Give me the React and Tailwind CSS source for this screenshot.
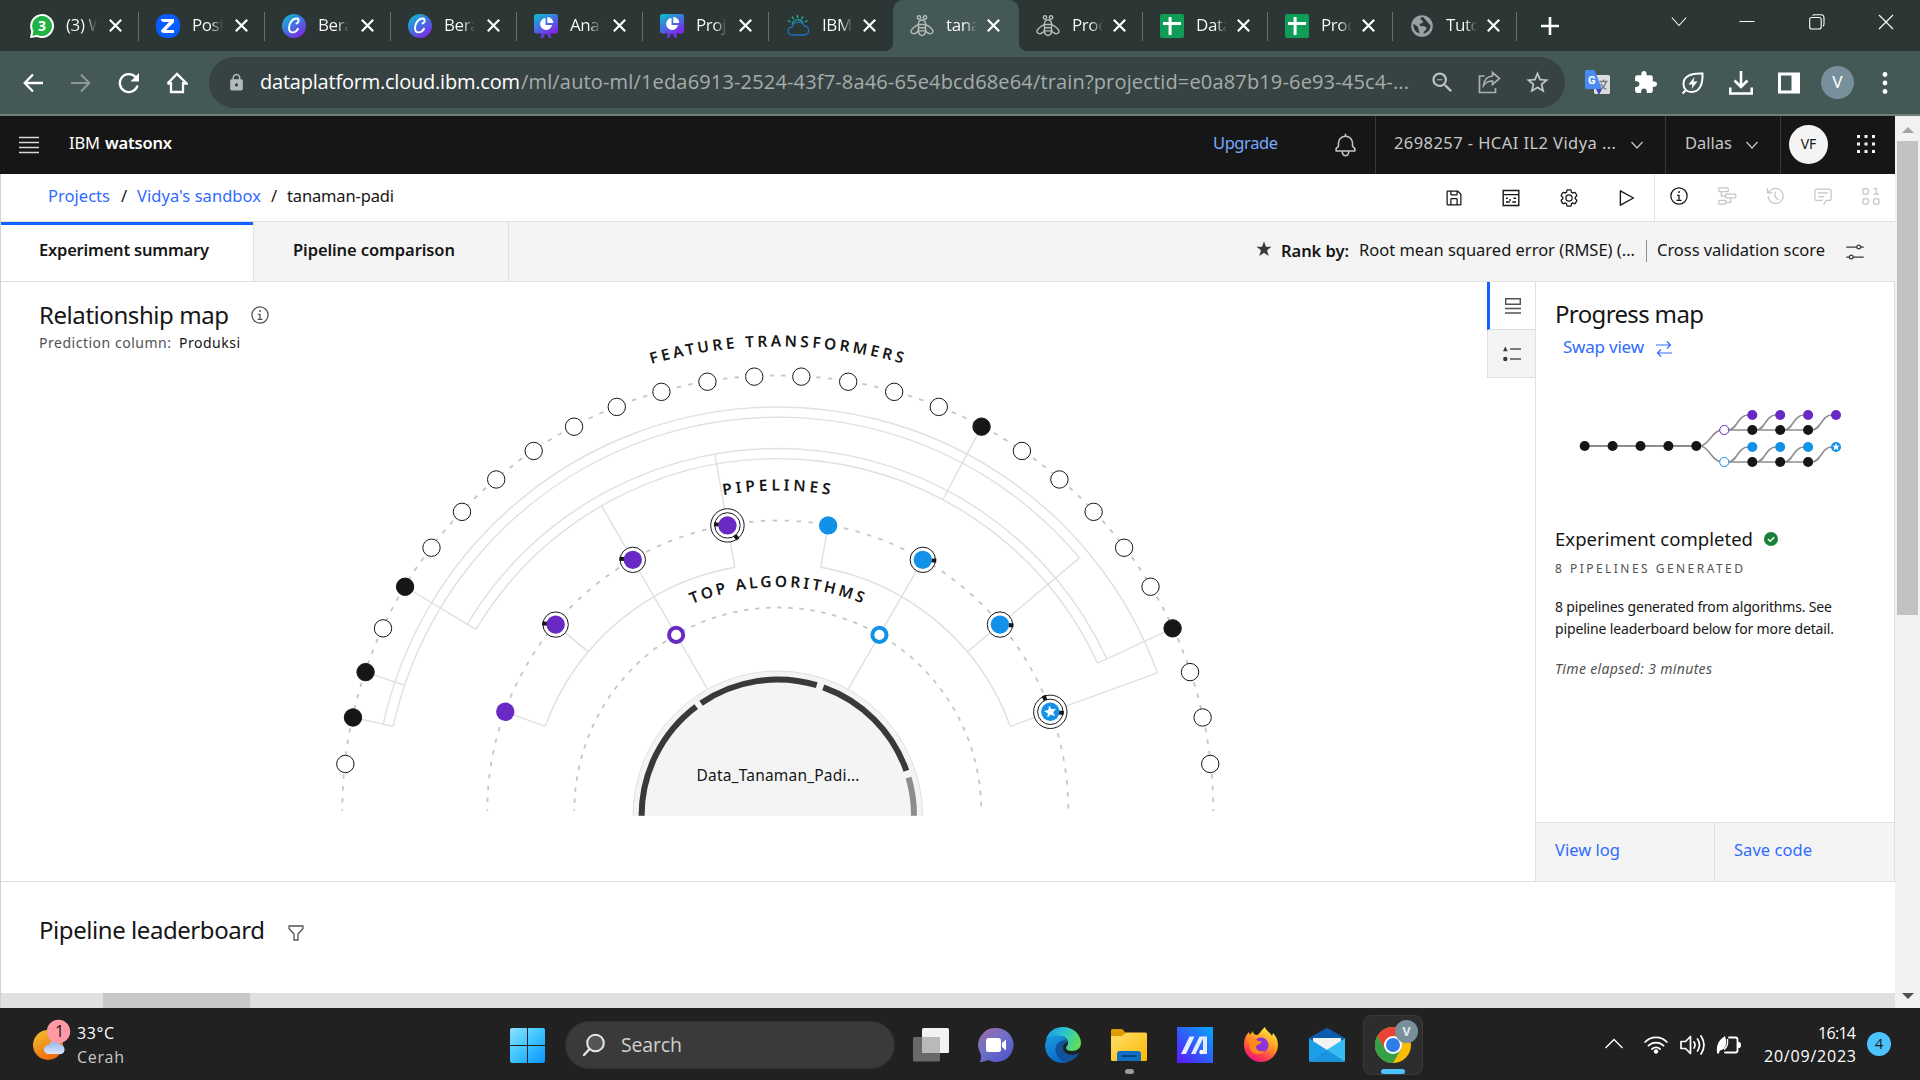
import React, { useLayoutEffect, useRef } from "react";
import { MdExtension, MdZoomOut, MdStarBorder, MdLock } from "react-icons/md";

/* Text set to a known width by evenly spreading its letters. */
function Fit({ w, children, className = "" }) {
  const ref = useRef(null);
  useLayoutEffect(() => {
    const el = ref.current;
    el.style.letterSpacing = "0px";
    const nat = el.getBoundingClientRect().width;
    el.style.letterSpacing = (w - nat) / Math.max(1, String(children).length - 1) + "px";
  }, [w, children]);
  return (
    <span className={"block shrink-0 whitespace-nowrap " + className} style={{ width: w }}>
      <span ref={ref} className="inline-block whitespace-pre">{children}</span>
    </span>
  );
}

function Svg({ s = 20, vb = "0 0 32 32", className = "", children }) {
  return (
    <svg width={s} height={s} viewBox={vb} className={"block shrink-0 " + className} fill="currentColor">
      {children}
    </svg>
  );
}

/* ---------- favicons ---------- */
const Whatsapp = () => (
  <Svg s={24} vb="0 0 24 24">
    <path d="M12 0a12 12 0 1 1-5 22.900L0 24l1.200-7A12 12 0 0 1 12 0Z" fill="#fff" />
    <path d="M12 2a10 10 0 1 1-5 18.700L2.300 22l1.200-5A10 10 0 0 1 12 2Z" fill="#1fb141" />
    <text x="12" y="17" textAnchor="middle" fontSize="14" fontWeight="700" fill="#fff" fontFamily="Open Sans, sans-serif">3</text>
  </Svg>
);
const Zoom = () => (
  <Svg s={24} vb="0 0 24 24">
    <rect width="24" height="24" rx="10" fill="#0b5cff" />
    <path d="M5 5h13v3.200L10 16h8v3H8.500Q5 19 5 16.500L13 8H8Q5 8 5 5Z" fill="#fff" />
  </Svg>
);
const Canva = () => (
  <Svg s={24} vb="0 0 24 24">
    <defs>
      <linearGradient id="cv" x1="0" y1="0" x2=".7" y2="1">
        <stop offset="0" stopColor="#09c3cb" /><stop offset=".5" stopColor="#3d78e0" /><stop offset="1" stopColor="#7d2ae8" />
      </linearGradient>
    </defs>
    <circle cx="12" cy="12" r="12" fill="url(#cv)" />
    <path d="M14.500 9.500c2.500-.500 3-4.700.3-5C10.500 4 7 9.500 7 14c0 6 6.500 5.500 9 .8" fill="none" stroke="#fff" strokeWidth="1.900" strokeLinecap="round" />
  </Svg>
);
const Chart = () => (
  <Svg s={24} vb="0 0 24 24">
    <defs>
      <linearGradient id="ch" x1="0" y1="0" x2=".7" y2="1">
        <stop offset="0" stopColor="#09c3cb" /><stop offset=".5" stopColor="#3d78e0" /><stop offset="1" stopColor="#7d2ae8" />
      </linearGradient>
    </defs>
    <path d="M8 18 6.500 24h2.700l1.800-4h2l1.800 4h2.700L16 18Z" fill="#6a35e6" />
    <rect width="24" height="19.500" rx="2.500" fill="url(#ch)" />
    <path d="M11.500 4a6 6 0 1 0 6.500 7h-6.500Z" fill="#fff" />
    <path d="M13.300 3v6h6a6 6 0 0 0-6-6Z" fill="#fff" />
  </Svg>
);
const CloudSun = () => (
  <Svg s={24} vb="0 0 24 24">
    <path d="M6 21h12a4.500 4.500 0 0 0 .5-9 6.500 6.500 0 0 0-12.300 1A4 4 0 0 0 6 21Z" fill="none" stroke="#1e6fc0" strokeWidth="1.300" />
    <path d="M6 10.500a6 6 0 0 1 11-2" fill="none" stroke="#1fa89a" strokeWidth="1.200" />
    <path d="M11.500 1v3M6 2.500 7.500 5M17 2.500 15.500 5M1.800 6.500 4.500 8M21.500 6.500 19 8" stroke="#27b9a2" strokeWidth="1.300" />
  </Svg>
);
const Bee = () => (
  <Svg s={24} vb="0 0 24 24">
    <g fill="none" stroke="#b4bbb9" strokeWidth="1.400">
      <circle cx="9" cy="3.500" r="1.700" /><circle cx="15" cy="3.500" r="1.700" />
      <path d="M8.500 9.500a3.500 3.500 0 0 1 7 0v8c0 2-1.500 3.500-3.500 4.200-2-.7-3.500-2.200-3.500-4.200Zm0 1h7m-7 3.200h7m-7 3.200h7" />
      <path d="M8.500 10.500C5 12 1 15.500 1 17.500S3.500 20 5 19.500s3.500-2 3.500-4M15.500 10.500C19 12 23 15.500 23 17.500s-2.500 2.500-4 2-3.500-2-3.500-4" />
    </g>
  </Svg>
);
const Sheet = () => (
  <Svg s={24} vb="0 0 24 24">
    <rect width="24" height="24" rx="2" fill="#0f9d58" />
    <path d="M8.600 3h3v5H21v3h-9.400v10h-3V11H3V8h5.600Z" fill="#fff" />
  </Svg>
);
const Globe = () => (
  <Svg s={24} vb="0 0 24 24">
    <circle cx="12" cy="12" r="10.800" fill="#9aa0a6" />
    <path d="M13 3c-3 0-3 3-1 3.500s1 3-1 3-2 2 0 2.500 5 0 5.500 2-3 3-3 5.500c3-.5 7-3 7-8M3.500 10c3 1 5 3 5 5s1 2 1 4.500C5 18 3 14 3.500 10Z" fill="#2b3635" />
  </Svg>
);

const TABS = [
  { icon: Whatsapp, t: "(3) W", w: "w-[126px]" },
  { icon: Zoom, t: "Post", w: "w-[126px]" },
  { icon: Canva, t: "Bera", w: "w-[126px]" },
  { icon: Canva, t: "Bera", w: "w-[126px]" },
  { icon: Chart, t: "Anal", w: "w-[126px]" },
  { icon: Chart, t: "Proje", w: "w-[126px]" },
  { icon: CloudSun, t: "IBM", w: "w-[124px]" },
  { icon: Bee, t: "tana", w: "w-[126px]", active: true },
  { icon: Bee, t: "Prod", w: "w-[124px]" },
  { icon: Sheet, t: "Data", w: "w-[125px]" },
  { icon: Sheet, t: "Prod", w: "w-[125px]" },
  { icon: Globe, t: "Tutor", w: "w-[124px]" },
];

const Cross = ({ s = 13, sw = 2.2, className = "" }) => (
  <Svg s={s} vb="0 0 13 13" className={className}>
    <path d="M.8.800 12.200 12.200M12.200.800.800 12.200" stroke="currentColor" strokeWidth={sw} />
  </Svg>
);

function TabStrip() {
  return (
    <div className="flex h-[51px] bg-[#2b3635] pl-[13px] text-white">
      {TABS.map((tab, i) => {
        const Icon = tab.icon;
        const line = !tab.active && i !== 6;
        return (
          <div
            key={i}
            className={
              "relative flex h-[51px] shrink-0 items-center pl-[17px] " + tab.w +
              (tab.active ? " rounded-t-[10px] bg-[#445855]" : "")
            }
          >
            <Icon />
            <div className="ml-3 w-[31px] overflow-hidden whitespace-nowrap bg-linear-to-r from-white from-60% to-transparent bg-clip-text pb-px font-['Open_Sans','Noto_Sans',sans-serif] text-[17px] tracking-tight text-transparent">
              {tab.t}
            </div>
            <Cross className={i >= 6 ? "ml-[10px]" : "ml-[12px]"} />
            {line && <div className="absolute right-0 top-3 h-[29px] w-px bg-[#65716f]" />}
            {tab.active && (
              <>
                <div className="absolute -left-2 bottom-0 size-2 bg-[#445855]"><div className="size-2 rounded-br-lg bg-[#2b3635]" /></div>
                <div className="absolute -right-2 bottom-0 size-2 bg-[#445855]"><div className="size-2 rounded-bl-lg bg-[#2b3635]" /></div>
              </>
            )}
          </div>
        );
      })}
      <Svg s={18} vb="0 0 18 18" className="ml-[24px] mt-[17px]"><path d="M9 0v18M0 9h18" stroke="#fff" strokeWidth="2.600" /></Svg>
      <Svg s={16} vb="0 0 16 16" className="ml-[112px] mt-[14px]"><path d="M.8 3.500 8 11.500 15.200 3.500" fill="none" stroke="#fff" strokeWidth="1.100" /></Svg>
      <Svg s={16} vb="0 0 16 16" className="ml-[52px] mt-[14px]"><path d="M.5 7.500h15" stroke="#fff" strokeWidth="1" /></Svg>
      <Svg s={16} vb="0 0 16 16" className="ml-[54px] mt-[14px]">
        <g fill="none" stroke="#fff" strokeWidth="1.100"><rect x=".7" y="3.500" width="11.500" height="11.500" rx="2" /><path d="M3.500 1.500Q4 .7 5.500.700H12Q15 .7 15 4v6q0 1.500-1 2.200" /></g>
      </Svg>
      <Cross s={16} sw={0.9} className="ml-[53px] mt-[14px]" />
    </div>
  );
}

function Toolbar() {
  return (
    <div className="flex h-[65px] items-center border-b-2 border-[#6c7f79] bg-[#445855] pl-[23px] text-white">
      <Svg s={20} vb="0 0 20 20"><path d="M20 10H2M10 1.500 1.700 10l8.300 8.500" fill="none" stroke="#fff" strokeWidth="2.300" /></Svg>
      <Svg s={20} vb="0 0 20 20" className="ml-[28px]"><path d="M0 10h18M10 1.500l8.300 8.500-8.300 8.500" fill="none" stroke="#8b9896" strokeWidth="2.100" /></Svg>
      <Svg s={22} vb="0 0 22 22" className="ml-[27px]"><path d="M19.500 13.500A9 9 0 1 1 17.500 5" fill="none" stroke="#fff" strokeWidth="2.300" /><path d="M21 1v8.500h-8.500Z" /></Svg>
      <Svg s={22} vb="0 0 22 22" className="ml-[26px]"><path d="M5 10v10h12V10M1.500 11.500 11 2l9.500 9.500H17M5 11.500H1.500" fill="none" stroke="#fff" strokeWidth="2.300" /></Svg>
      <div className="ml-[21px] flex h-[51px] w-[1356px] shrink-0 items-center rounded-full bg-[#374342] pl-[18px] font-['Open_Sans','Noto_Sans',sans-serif] text-[20px]">
        <MdLock className="size-[19px] shrink-0 text-[#b4babb]" />
        <Fit w={260} className="ml-[14px] pb-px">dataplatform.cloud.ibm.com</Fit>
        <Fit w={888} className="ml-px pb-px text-[#a5adac]">/ml/auto-ml/1eda6913-2524-43f7-8a46-65e4bcd68e64/train?projectid=e0a87b19-6e93-45c4-...</Fit>
        <MdZoomOut className="ml-[20px] size-[27px] shrink-0 text-[#bcc1c1]" />
        <Svg s={23} vb="0 0 23 23" className="ml-[22px] text-[#a9b0af]">
          <path d="M6.500 5H1.500v16.500h16V17M14.500 1.500l7 6-7 6v-3.500c-4 0-6.500 1-9 4.500.5-5 3.500-9 9-9.500Z" fill="none" stroke="currentColor" strokeWidth="1.700" />
        </Svg>
        <MdStarBorder className="ml-[23px] size-[27px] shrink-0 text-[#bcc1c1]" />
      </div>
      <Svg s={25} vb="0 0 25 25" className="ml-[20px]">
        <rect x="9" y="5" width="16" height="19" rx="1.500" fill="#dadce0" />
        <path d="M1.500 0h8L17 19H1.500Q0 19 0 17.500v-16Q0 0 1.500 0Z" fill="#4a8af4" />
        <path d="m11 19 3 6 3-6Z" fill="#3547c0" />
        <text x="3" y="13.500" fontSize="11" fontWeight="700" fill="#fff" fontFamily="Roboto, sans-serif">G</text>
        <path d="M14.500 11.500h8M18.500 9.500v2M21 12c-1 4-3 6-5 7.500M16 13.500c1 3 3 5 5.500 6" stroke="#6f7a85" strokeWidth="1.300" fill="none" />
      </Svg>
      <MdExtension className="ml-[23px] size-[25px] shrink-0" />
      <Svg s={24} vb="0 0 24 24" className="ml-[23px]">
        <path d="M21.500 2.500C10 2 2.500 5 2.500 13c0 5 3.500 8 8 8 8 0 11.500-7.500 11-18.500ZM1.500 22.500 5.500 18.500" fill="none" stroke="#fff" strokeWidth="2" />
        <path d="m13.500 6-6 7.500h4l-1 4.500 6-7.500h-4Z" />
      </Svg>
      <Svg s={24} vb="0 0 24 24" className="ml-[24px]"><path d="M12 0v15M5.500 9.500 12 16l6.500-6.500M1.300 16.500v6h21.400v-6" fill="none" stroke="#fff" strokeWidth="2.600" /></Svg>
      <Svg s={22} vb="0 0 22 22" className="ml-[25px]"><path d="M0 .500h22v21H0Zm3 3v15h10.500v-15Z" fillRule="evenodd" /></Svg>
      <div className="ml-[21px] flex size-[33px] shrink-0 items-center justify-center rounded-full bg-[#78909c] font-['Roboto',sans-serif] text-[17px]">V</div>
      <Svg s={22} vb="0 0 22 22" className="ml-[20px]"><circle cx="11" cy="2.500" r="2.400" /><circle cx="11" cy="11" r="2.400" /><circle cx="11" cy="19.500" r="2.400" /></Svg>
    </div>
  );
}

const Chevron = ({ className }) => (
  <Svg s={12} vb="0 0 12 12" className={className}><path d="M.5 3 6 9l5.500-6" fill="none" stroke="currentColor" strokeWidth="1.200" /></Svg>
);

function AppHeader() {
  return (
    <div className="flex h-[58px] items-center bg-[#161616] pl-[19px] text-[16.500px] text-[#c6c6c6]">
      <Svg s={20} vb="0 0 20 20"><path d="M0 2.500h20M0 7.500h20M0 12.500h20M0 17.500h20" stroke="#d8d8d8" strokeWidth="1.500" /></Svg>
      <Fit w={31} className="ml-[30px] pb-[4px] text-white">IBM</Fit>
      <Fit w={67} className="ml-[5px] pb-[4px] font-semibold text-white">watsonx</Fit>
      <Fit w={65} className="ml-[1041px] pb-[4px] text-[#78a9ff]">Upgrade</Fit>
      <Svg s={25} className="ml-[55px]">
        <path d="M28.707 19.293 26 16.586V13a10.014 10.014 0 0 0-9-9.950V1h-2v2.050A10.014 10.014 0 0 0 6 13v3.586l-2.707 2.707A1 1 0 0 0 3 20v3a1 1 0 0 0 1 1h7v.777a5.152 5.152 0 0 0 4.500 5.199A5.006 5.006 0 0 0 21 25v-1h7a1 1 0 0 0 1-1v-3a1 1 0 0 0-.293-.707ZM19 25a3 3 0 0 1-6 0v-1h6Zm8-3H5v-1.586l2.707-2.707A1 1 0 0 0 8 17v-4a8 8 0 0 1 16 0v4a1 1 0 0 0 .293.707L27 20.414Z" />
      </Svg>
      <div className="ml-[17px] flex h-full w-[290px] shrink-0 items-center border-l border-[#393939] pl-[18px]">
        <Fit w={222} className="pb-[4px]">2698257 - HCAI IL2 Vidya ...</Fit>
        <Chevron className="ml-[15px]" />
      </div>
      <div className="flex h-full w-[115px] shrink-0 items-center border-l border-[#393939] pl-[19px]">
        <Fit w={47} className="pb-[4px]">Dallas</Fit>
        <Chevron className="ml-[14px]" />
      </div>
      <div className="flex h-full flex-1 items-center border-l border-[#393939] pb-[2px] pl-[8px]">
        <div className="flex size-[39px] items-center justify-center rounded-full bg-[#f4f4f4] pb-0.5 text-[14px] text-[#161616]">VF</div>
        <Svg s={18} vb="0 0 18 18" className="ml-[29px] text-[#f4f4f4]">
          <path d="M0 0h3v3H0ZM7.500 0h3v3h-3ZM15 0h3v3h-3ZM0 7.500h3v3H0Zm7.500 0h3v3h-3Zm7.500 0h3v3h-3ZM0 15h3v3H0Zm7.500 0h3v3h-3Zm7.500 0h3v3h-3Z" />
        </Svg>
      </div>
    </div>
  );
}

const InfoIcon = ({ className = "" }) => (
  <Svg s={20} className={className}>
    <path d="M17 22v-8h-4v2h2v6h-3v2h8v-2ZM16 8a1.500 1.500 0 1 0 1.500 1.500A1.500 1.500 0 0 0 16 8Z" />
    <path d="M16 30a14 14 0 1 1 14-14 14 14 0 0 1-14 14Zm0-26a12 12 0 1 0 12 12A12 12 0 0 0 16 4Z" />
  </Svg>
);

function Breadcrumb() {
  return (
    <div className="flex h-[48px] items-center border-b border-[#e0e0e0] pl-[47px] text-[16.500px] text-[#161616]">
      <Fit w={62} className="pb-[3px] text-[#2f6bff]">Projects</Fit>
      <Fit w={6} className="ml-[11px] pb-[3px]">/</Fit>
      <Fit w={124} className="ml-[10px] pb-[3px] text-[#2f6bff]">Vidya's sandbox</Fit>
      <Fit w={6} className="ml-[10px] pb-[3px]">/</Fit>
      <Fit w={107} className="ml-[10px] pb-[3px]">tanaman-padi</Fit>
      <Svg className="ml-[1050px] mt-px">
        <path d="m27.710 9.290-5-5A1 1 0 0 0 22 4H6a2 2 0 0 0-2 2v20a2 2 0 0 0 2 2h20a2 2 0 0 0 2-2V10a1 1 0 0 0-.290-.710ZM12 6h8v4h-8Zm8 20h-8v-8h8Zm2 0v-8a2 2 0 0 0-2-2h-8a2 2 0 0 0-2 2v8H6V6h4v4a2 2 0 0 0 2 2h8a2 2 0 0 0 2-2V6.410l4 4V26Z" />
      </Svg>
      <Svg className="ml-[37px] mt-px">
        <path d="M3.500 4h25v24h-25ZM3.500 10.500h25" fill="none" stroke="currentColor" strokeWidth="2.200" />
        <path d="M8 15h3v2.500H8Zm5 3h3v2.500h-3Zm5 3h6v2.500h-6ZM8 21h6v2.500H8Zm12-6h4v2.500h-4Z" />
      </Svg>
      <Svg className="ml-[38px] mt-px">
        <path d="M27 16.760v-1.530l1.920-1.680A2 2 0 0 0 29.300 11l-2.360-4a2 2 0 0 0-1.730-1 2 2 0 0 0-.640.100l-2.430.820a11.350 11.350 0 0 0-1.310-.750l-.510-2.520a2 2 0 0 0-2-1.610h-4.680a2 2 0 0 0-2 1.610l-.510 2.520a11.480 11.480 0 0 0-1.320.750l-2.380-.860A2 2 0 0 0 6.790 6a2 2 0 0 0-1.730 1L2.700 11a2 2 0 0 0 .410 2.510L5 15.240v1.530l-1.890 1.680A2 2 0 0 0 2.700 21l2.360 4a2 2 0 0 0 1.730 1 2 2 0 0 0 .640-.100l2.430-.820a11.350 11.350 0 0 0 1.310.750l.510 2.520a2 2 0 0 0 2 1.610h4.720a2 2 0 0 0 2-1.610l.510-2.520a11.480 11.480 0 0 0 1.320-.750l2.420.820a2 2 0 0 0 .640.100 2 2 0 0 0 1.730-1l2.280-4a2 2 0 0 0-.410-2.510ZM25.210 24l-3.430-1.160a8.860 8.860 0 0 1-2.710 1.570L18.360 28h-4.720l-.710-3.550a9.360 9.360 0 0 1-2.700-1.570L6.790 24l-2.360-4 2.720-2.400a8.900 8.900 0 0 1 0-3.130L4.430 12l2.360-4 3.430 1.160a8.860 8.860 0 0 1 2.710-1.570L13.640 4h4.720l.710 3.550a9.360 9.360 0 0 1 2.700 1.570L25.210 8l2.360 4-2.720 2.400a8.900 8.900 0 0 1 0 3.130L27.570 20Z" />
        <circle cx="16" cy="16" r="5" fill="none" stroke="currentColor" strokeWidth="2" />
      </Svg>
      <Svg className="ml-[37px] mt-px"><path d="M7 4.500v23L28 16Z" fill="none" stroke="currentColor" strokeWidth="2.200" strokeLinejoin="round" /></Svg>
      <div className="ml-[18px] flex h-full items-center border-l border-[#e0e0e0] pb-[3px] pl-[14px]">
        <InfoIcon />
        <div className="flex gap-7 pl-7 text-[#c6c6c6]">
          <Svg><g fill="none" stroke="currentColor" strokeWidth="2"><rect x="3" y="3" width="15" height="6" rx="1" /><rect x="14" y="13" width="16" height="6" rx="1" /><rect x="3" y="23" width="11" height="6" rx="1" /><path d="M7 9v7h7M22 19v7h-8" /></g></Svg>
          <Svg><path d="M5 16A12 12 0 1 0 9 7l-4 3.500M4 3v8h8M16 9v8l5.500 5.500" fill="none" stroke="currentColor" strokeWidth="2" /></Svg>
          <Svg><path d="M17 30l4-7h5a3 3 0 0 0 3-3V8a3 3 0 0 0-3-3H6a3 3 0 0 0-3 3v12a3 3 0 0 0 3 3h9M8 11h16M8 17h10" fill="none" stroke="currentColor" strokeWidth="2" /></Svg>
          <Svg><g fill="none" stroke="currentColor" strokeWidth="2"><rect x="3" y="4" width="9" height="9" rx="3.500" /><rect x="3" y="20" width="9" height="9" rx="3.500" /><rect x="20" y="20" width="9" height="9" rx="3.500" /><path d="M20 4h4.500v9M20 13h9" /></g></Svg>
        </div>
      </div>
    </div>
  );
}

function ViewTabs() {
  return (
    <div className="flex h-[60px] border-b border-[#e0e0e0] bg-[#f4f4f4] text-[16.500px] leading-[25px] text-[#161616]">
      <div className="flex w-[252px] shrink-0 items-start border-t-[3px] border-[#0f62fe] bg-white pl-[38px] pt-[12px]">
        <Fit w={170} className="font-semibold">Experiment summary</Fit>
      </div>
      <div className="flex w-[256px] shrink-0 items-start border-x border-[#e0e0e0] pl-[39px] pt-[15px]">
        <Fit w={162} className="font-semibold">Pipeline comparison</Fit>
      </div>
      <div className="flex flex-1 items-start pt-[15px]">
        <Svg s={16} vb="0 0 16 16" className="ml-[747px] mt-[4px] text-[#393939]"><path d="m8 .300 1.900 5.400h5.600L11 9.200l1.700 5.800L8 11.700 3.300 15 5 9.200.500 5.700h5.600Z" /></Svg>
        <Fit w={68} className="ml-[9px] pt-px font-semibold">Rank by:</Fit>
        <Fit w={276} className="ml-[10px]">Root mean squared error (RMSE) (...</Fit>
        <div className="ml-[11px] mt-[3px] h-[22px] w-px bg-[#8d8d8d]" />
        <Fit w={168} className="ml-[10px]">Cross validation score</Fit>
        <Svg s={20} className="ml-[20px] mt-[5px] text-[#393939]"><path d="M2 8h17M25 8h5M2 24h5M13 24h17" stroke="currentColor" strokeWidth="2" /><circle cx="22" cy="8" r="3" fill="none" stroke="currentColor" strokeWidth="2" /><circle cx="10" cy="24" r="3" fill="none" stroke="currentColor" strokeWidth="2" /></Svg>
      </div>
    </div>
  );
}

/* ---------- relationship map ---------- */
const CX = 777.8;
const CY = 811;
/* Angles run clockwise from the left horizon, in degrees. */
const pt = (r, a, cy = CY) => {
  const t = (a * Math.PI) / 180;
  return [CX - r * Math.cos(t), cy - r * Math.sin(t)];
};
const arc = (r, a, b, cy = CY) => {
  const [x1, y1] = pt(r, a, cy);
  const [x2, y2] = pt(r, b, cy);
  return `M${x1} ${y1}A${r} ${r} 0 0 1 ${x2} ${y2}`;
};
const spoke = (a, r1, r2) => {
  const [x1, y1] = pt(r1, a);
  const [x2, y2] = pt(r2, a);
  return `M${x1} ${y1}L${x2} ${y2}`;
};
const STEP = 180 / 29;
const FILLED = [2, 3, 5, 19, 25];
const PURPLE = "#6929c4";
const BLUE = "#1192e8";
const LINKS = [
  arc(404, 2 * STEP, 160), arc(393.8, 2 * STEP, 140),
  arc(362.5, 5 * STEP, 25 * STEP), arc(352.3, 5 * STEP, 25 * STEP),
  arc(247.5, 20, 80), arc(247.5, 100, 160),
  spoke(2 * STEP, 435, 393.8), spoke(3 * STEP, 435, 393.8), spoke(5 * STEP, 435, 352.3),
  spoke(19 * STEP, 435, 352.3), spoke(25 * STEP, 435, 352.3),
  spoke(20, 290, 247.5), spoke(40, 290, 247.5), spoke(60, 352.3, 141), spoke(80, 362.5, 247.5),
  spoke(100, 290, 247.5), spoke(120, 290, 141), spoke(140, 393.8, 247.5), spoke(160, 404, 247.5),
];
const PIPES = [
  { a: 20, c: PURPLE, rings: [], ticks: [] },
  { a: 40, c: PURPLE, rings: [12.7], ticks: [[-11, -1, 5]] },
  { a: 60, c: PURPLE, rings: [12.7], ticks: [[-11, -1, 5]] },
  { a: 80, c: PURPLE, rings: [12.7, 16.7], ticks: [[-11, -1, 5], [9, 12, 53]] },
  { a: 100, c: BLUE, rings: [], ticks: [] },
  { a: 120, c: BLUE, rings: [12.7], ticks: [[11, 0.7, 4]] },
  { a: 140, c: BLUE, rings: [12.7], ticks: [[11, 0.7, 4]] },
  { a: 160, c: BLUE, rings: [12.7, 16.7], ticks: [[11, 1, 5], [-5.7, -14, 68]], star: true },
];
const STAR = "M0-6.500 1.700-2.200 6.200-2 2.700.900 3.900 5.300 0 2.800-3.900 5.300-2.700.900-6.200-2-1.700-2.200Z";

function RelationshipMap() {
  return (
    <svg width="896" height="496" viewBox="330 320 896 496" className="mt-[38px] block shrink-0">
      <defs>
        <path id="featurePath" d={arc(464.5, 74.2, 115)} />
        <path id="pipePath" d={arc(320.5, 80.2, 115)} />
        <path id="algoPath" d={arc(224, 67.5, 125)} />
      </defs>
      <g fill="none" stroke="#c6c6c6" strokeWidth="1.800">
        <path d={arc(435.5, 0, 180)} strokeDasharray="4.500 7.200" strokeDashoffset="3" />
        <path d={arc(290.5, 0, 180)} strokeDasharray="4.500 7.450" strokeDashoffset="3" />
        <path d={arc(203.5, 0, 180)} strokeDasharray="4.500 6.600" strokeDashoffset="3" />
      </g>
      <g fill="none" stroke="#e0e0e0" strokeWidth="1.400">
        {LINKS.map((d, i) => <path key={i} d={d} />)}
      </g>
      <circle cx={CX} cy="815.700" r="144.700" fill="#f4f4f4" stroke="#e0e0e0" />
      <g fill="none" stroke="#393939" strokeWidth="6">
        <path d={arc(136.2, 0, 53.2, 815.7)} />
        <path d={arc(136.2, 55.7, 106.6, 815.7)} />
        <path d={arc(136.2, 109.5, 160.7, 815.7)} />
        <path d={arc(136.2, 163.8, 180, 815.7)} stroke="#8d8d8d" />
      </g>
      {Array.from({ length: 28 }, (_, i) => {
        const [x, y] = pt(435, (i + 1) * STEP);
        return <circle key={i} cx={x} cy={y} r="8.700" fill={FILLED.includes(i + 1) ? "#161616" : "#fff"} stroke="#161616" />;
      })}
      {[[60, PURPLE], [120, BLUE]].map(([a, c]) => {
        const [x, y] = pt(203.3, a);
        return <circle key={a} cx={x} cy={y} r="7.100" fill="#fff" stroke={c} strokeWidth="4" />;
      })}
      {PIPES.map((p) => {
        const [x, y] = pt(290, p.a);
        return (
          <g key={p.a} transform={`translate(${x} ${y})`}>
            {[...p.rings].reverse().map((r) => <circle key={r} r={r} fill="#fff" stroke="#161616" />)}
            {p.ticks.map(([tx, ty, rot], i) => <rect key={i} x="-2.500" y="-2" width="5" height="4" fill="#161616" transform={`translate(${tx} ${ty}) rotate(${rot})`} />)}
            <circle r="9.200" fill={p.c} />
            {p.star && <path d={STAR} fill="#fff" transform="rotate(-10)" />}
          </g>
        );
      })}
      <g fontSize="15.500" fontWeight="600" fill="#161616">
        <text><textPath href="#featurePath" textLength="254">FEATURE TRANSFORMERS</textPath></text>
        <text><textPath href="#pipePath" textLength="107">PIPELINES</textPath></text>
        <text><textPath href="#algoPath" textLength="174">TOP ALGORITHMS</textPath></text>
      </g>
      <text x="696.500" y="781" fontSize="15.500" fill="#161616" textLength="163">Data_Tanaman_Padi...</text>
    </svg>
  );
}

/* ---------- progress map ---------- */
function Branch({ y, color, star }) {
  const xs = [1752.3, 1780.2, 1808.1];
  const up = y - 15;
  const starts = [1724.3, ...xs];
  const tops = [...xs, 1836];
  return (
    <g>
      <g fill="none" stroke="#8d8d8d" strokeWidth="1.600">
        <path d={`M1724.300 ${y}H1808`} />
        {starts.map((x, i) => <path key={x} d={`M${x + 4} ${y}C${x + 13} ${y} ${tops[i] - 15} ${up} ${tops[i] - 4} ${up}`} />)}
      </g>
      <circle cx="1724.300" cy={y} r="4.600" fill="#fff" stroke={color} />
      {xs.map((x) => <circle key={x} cx={x} cy={y} r="5" fill="#161616" />)}
      {tops.map((x) => <circle key={x} cx={x} cy={up} r="5" fill={color} />)}
      {star && <path d={STAR} fill="#fff" transform={`translate(1836 ${up}) scale(.6)`} />}
    </g>
  );
}

function ProgressPanel() {
  return (
    <div className="flex w-[360px] shrink-0 flex-col border-x border-[#e0e0e0] text-[#161616]">
      <div className="h-[540px] pl-[19px] pt-[16px]">
        <Fit w={149} className="h-[32px] text-[24px] leading-[31px]">Progress map</Fit>
        <div className="ml-[8px] mt-[5px] flex h-[24px] items-center text-[#2f6bff]">
          <Fit w={81} className="text-[17px] leading-[24px]">Swap view</Fit>
          <Svg s={16} vb="0 0 16 16" className="ml-[12px] mt-[4px]"><path d="M0 4h14.500M11 .500 14.500 4 11 7.500M16 12H1.500M5 8.500 1.500 12 5 15.500" fill="none" stroke="currentColor" strokeWidth="1.200" /></Svg>
        </div>
        <svg width="280" height="70" viewBox="1570 405 280 70" className="ml-[15px] mt-[46px] block">
          <g fill="none" stroke="#8d8d8d" strokeWidth="1.800">
            <path d="M1584.700 446H1696" />
            <path d="M1700 446c9 0 12-16 22-16M1700 446c9 0 12 16 22 16" strokeWidth="1.500" />
          </g>
          {[1584.7, 1612.6, 1640.5, 1668.4, 1696.3].map((x) => <circle key={x} cx={x} cy="446" r="5" fill="#161616" />)}
          <Branch y={430} color={PURPLE} />
          <Branch y={462} color={BLUE} star />
        </svg>
        <div className="mt-[52px] flex h-[24px] items-center">
          <Fit w={198} className="text-[18.500px] leading-[24px]">Experiment completed</Fit>
          <Svg s={14} vb="0 0 14 14" className="ml-[11px]"><circle cx="7" cy="7" r="7" fill="#198038" /><path d="m4 7 2.200 2.200L10.200 5.200" fill="none" stroke="#fff" strokeWidth="1.600" /></Svg>
        </div>
        <Fit w={188} className="mt-[8px] text-[12px] leading-[20px] text-[#525252]">8 PIPELINES GENERATED</Fit>
        <Fit w={277} className="mt-[17px] text-[14px] leading-[22px]">8 pipelines generated from algorithms. See</Fit>
        <Fit w={279} className="text-[14px] leading-[22px]">pipeline leaderboard below for more detail.</Fit>
        <Fit w={157} className="mt-[18px] text-[14px] italic leading-[22px] text-[#525252]">Time elapsed: 3 minutes</Fit>
      </div>
      <div className="flex h-[59px] border-t border-[#e0e0e0] bg-[#f4f4f4] text-[16.500px] leading-[24px] text-[#2f6bff]">
        <div className="w-[179px] border-r border-[#e0e0e0] pl-[19px] pt-[15px]"><Fit w={65}>View log</Fit></div>
        <div className="flex-1 pl-[19px] pt-[15px]"><Fit w={78}>Save code</Fit></div>
      </div>
    </div>
  );
}

function Content() {
  return (
    <div className="flex h-[600px] border-b border-[#e0e0e0] text-[#161616]">
      <div className="w-[329px] shrink-0 pl-[38px] pt-[16px]">
        <div className="flex h-[32px] items-center">
          <Fit w={190} className="text-[24px] leading-[31px]">Relationship map</Fit>
          <InfoIcon className="ml-[21px] mt-[2px] text-[#525252]" />
        </div>
        <div className="mt-[2px] flex text-[14px] leading-[22px]">
          <Fit w={132} className="text-[#525252]">Prediction column:</Fit>
          <Fit w={61} className="ml-[8px]">Produksi</Fit>
        </div>
      </div>
      <RelationshipMap />
      <div className="ml-auto w-[48px] shrink-0 text-[#393939]">
        <div className="flex h-[48px] items-center justify-center border-b border-l-[3px] border-b-[#e0e0e0] border-l-[#0f62fe]">
          <Svg s={16} vb="0 0 16 16"><path d="M.7.700h14.600v5.500H.7ZM0 10.500h16M0 15h16" fill="none" stroke="#525252" strokeWidth="1.400" /></Svg>
        </div>
        <div className="flex h-[48px] items-center justify-center border-b border-l border-[#e0e0e0] bg-[#f4f4f4]">
          <Svg s={18} vb="0 0 18 18"><path d="M7 4h11M7 14h11" stroke="#525252" strokeWidth="1.700" /><path d="M2.300 1.500 4.600 6.200H0Z" /><circle cx="2.300" cy="14" r="2.200" /></Svg>
        </div>
      </div>
      <ProgressPanel />
    </div>
  );
}

function Leaderboard() {
  return (
    <div className="flex h-[111px] items-start pl-[38px] text-[#161616]">
      <Fit w={226} className="mt-[31px] text-[24px] leading-[34px]">Pipeline leaderboard</Fit>
      <Svg s={16} vb="0 0 16 16" className="ml-[23px] mt-[43px] text-[#525252]"><path d="M1 1h14v2.500L10 9v6H6V9L1 3.500Z" fill="none" stroke="currentColor" strokeWidth="1.300" strokeLinejoin="round" /></Svg>
    </div>
  );
}

/* ---------- taskbar ---------- */
function Taskbar() {
  return (
    <div className="flex h-[72px] items-center bg-[#212121] pt-[2px] font-['Open_Sans','Noto_Sans',sans-serif] text-white">
      <svg width="40" height="56" viewBox="32 1017 40 56" className="ml-[32px] block shrink-0">
        <defs>
          <linearGradient id="sun" x1="0" y1="0" x2=".5" y2="1"><stop offset="0" stopColor="#f3c530" /><stop offset="1" stopColor="#f06a10" /></linearGradient>
          <linearGradient id="cl" x1="0" y1="0" x2="0" y2="1"><stop offset="0" stopColor="#8fb3ef" /><stop offset="1" stopColor="#d8e5fb" /></linearGradient>
        </defs>
        <circle cx="48" cy="1045" r="15" fill="url(#sun)" />
        <path d="M48 1054a4.500 4.500 0 0 1 1-9 6 6 0 0 1 11.500-.5 5 5 0 0 1 1 9.500Z" fill="url(#cl)" />
        <circle cx="58.500" cy="1031.500" r="11.700" fill="#ff99a4" />
        <text x="59.500" y="1037" textAnchor="middle" fontSize="16" fill="#1a1a1a">1</text>
      </svg>
      <div className="ml-[5px] w-[60px] text-[16px] leading-[24px]">
        <Fit w={37}>33°C</Fit>
        <Fit w={47} className="text-[#c8c8c8]">Cerah</Fit>
      </div>
      <svg width="35" height="35" viewBox="0 0 35 35" className="ml-[373px] block shrink-0">
        <defs><linearGradient id="win" x1="0" y1="0" x2="1" y2="1"><stop offset="0" stopColor="#8ae2ff" /><stop offset=".5" stopColor="#3dc4ff" /><stop offset="1" stopColor="#0a94ff" /></linearGradient></defs>
        <path d="M2 0h15v17H0V2Q0 0 2 0ZM18 0h15q2 0 2 2v15H18ZM0 18h17v17H2q-2 0-2-2ZM18 18h17v15q0 2-2 2H18Z" fill="url(#win)" />
      </svg>
      <div className="ml-[20px] flex h-[48px] w-[330px] shrink-0 items-center rounded-full border border-[#313131] bg-[#3a3a3a] pl-[16px]">
        <Svg s={24} vb="0 0 24 24"><circle cx="13.500" cy="10" r="8.300" fill="#555" stroke="#e6e6e6" strokeWidth="2" /><path d="m7.500 16-5.500 6" stroke="#e6e6e6" strokeWidth="2.400" strokeLinecap="round" /></Svg>
        <Fit w={61} className="ml-[15px] text-[19.500px] text-[#d0d0d0]">Search</Fit>
      </div>
      <svg width="36" height="34" viewBox="0 0 36 34" className="ml-[18px] block shrink-0">
        <rect x="9" width="27" height="25" rx="1.500" fill="#f2f2f2" />
        <rect y="9" width="27" height="24.500" rx="1.500" fill="#686868" />
        <path d="M9 9h18v16H9Z" fill="#b9b9b9" />
      </svg>
      <svg width="36" height="36" viewBox="0 0 36 36" className="ml-[29px] block shrink-0">
        <defs><linearGradient id="chat" x1="0" y1="0" x2=".8" y2="1"><stop offset="0" stopColor="#a06a9e" /><stop offset=".5" stopColor="#7070c8" /><stop offset="1" stopColor="#5055cc" /></linearGradient></defs>
        <path d="M18.500 1a17 17 0 1 1-8 32Q5 35.500 1.500 35c1.500-2.500 2-5 1-8.500A17 17 0 0 1 18.500 1Z" fill="url(#chat)" />
        <rect x="8" y="11" width="15" height="14" rx="2.500" fill="#fff" /><path d="m24 16 4-3.500v11L24 20Z" fill="#fff" />
      </svg>
      <svg width="36" height="36" viewBox="0 0 36 36" className="ml-[31px] block shrink-0">
        <defs>
          <linearGradient id="e1" x1="0" y1=".3" x2="1" y2=".6"><stop offset="0" stopColor="#1b9de2" /><stop offset=".5" stopColor="#2fc6cc" /><stop offset="1" stopColor="#62e04e" /></linearGradient>
          <linearGradient id="e2" x1="0" y1="0" x2=".4" y2="1"><stop offset="0" stopColor="#1b9be0" /><stop offset="1" stopColor="#0a6cc8" /></linearGradient>
        </defs>
        <path d="M1 13C3 4 10 0 18 0c11 0 18 8 18 16 0 5-4 8-9 8-4 0-6-1.500-6-3s2-2 2-5c0-4-4-7-8.500-7C9 9 4 11 1 13Z" fill="url(#e1)" />
        <path d="M0 18C0 11 7 8.500 13 8.500c5 0 9 3 9 7C14 11.500 9 20 12 26c2.500 5 7 8 11 9C8 39 0 28 0 18Z" fill="url(#e2)" />
        <path d="M21.500 13.500C13 12 8 21 11.500 27.500 15 34 20 36 23 35c5-1.500 9-5 11-9-8 4-16 1-16-5.500 0-3.500 3.500-4 3.500-7Z" fill="#10539c" />
      </svg>
      <div className="relative ml-[30px] shrink-0">
        <svg width="36" height="36" viewBox="0 0 36 36" className="block">
          <defs><linearGradient id="fo" x1="0" y1="0" x2="1" y2="1"><stop offset="0" stopColor="#ffdf6f" /><stop offset="1" stopColor="#fcb900" /></linearGradient></defs>
          <path d="M0 3.500Q0 2 1.500 2H11l3.500 3.500V12H0Z" fill="#e09b00" />
          <path d="M0 9h11l4-3.500h19.500q1.500 0 1.500 1.500v25.500q0 1.500-1.500 1.500h-33Q0 34 0 32.500Z" fill="url(#fo)" />
          <path d="M6 34v-7q0-3 3-3h18q3 0 3 3v7Z" fill="#0f6fc5" /><path d="M10.500 29h15" stroke="#0a3f78" strokeWidth="1.800" />
        </svg>
        <div className="absolute -bottom-[11px] left-[14px] h-[5px] w-[9px] rounded-full bg-[#9a9a9a]" />
      </div>
      <svg width="36" height="36" viewBox="0 0 36 36" className="ml-[30px] block shrink-0">
        <defs><linearGradient id="ma" x1="0" y1="1" x2="1" y2="0"><stop offset="0" stopColor="#5a16ff" /><stop offset=".5" stopColor="#3060f8" /><stop offset="1" stopColor="#05a8ff" /></linearGradient></defs>
        <rect width="36" height="36" fill="url(#ma)" />
        <path d="M4 27 12.500 9.500h5L9 27ZM14 27l8.500-17.500h4.500L18.500 27ZM26 9.500h4V27h-4Z" fill="#e3ebff" />
        <circle cx="24.500" cy="25" r="2.200" fill="#fff" />
      </svg>
      <svg width="36" height="36" viewBox="0 0 36 36" className="ml-[30px] block shrink-0">
        <defs>
          <linearGradient id="ff" x1=".8" y1="0" x2=".3" y2="1"><stop offset="0" stopColor="#fff04a" /><stop offset=".45" stopColor="#ff9a20" /><stop offset=".8" stopColor="#ff3750" /><stop offset="1" stopColor="#e8158a" /></linearGradient>
        </defs>
        <path d="M22 0c1 4 5 5 7 9l1-3c3 3 5 7 5 12A17 17 0 0 1 1 18C1 12 3 8 6 5l1 3 3-4c0 3 2 4 4 4 3-1 4-5 8-8Z" fill="url(#ff)" />
        <circle cx="18" cy="18" r="7.500" fill="#8a35d8" />
        <path d="M5 13c4-3 8-1 10 1l4 .5c-1 3-5 3-6 5 0 4 5 6 9 4-3 5-13 5-15-2-.700-3-1-6-2-8.500Z" fill="#ff8a1c" />
      </svg>
      <svg width="36" height="36" viewBox="0 0 36 36" className="ml-[30px] block shrink-0">
        <path d="M0 11 18 .800 36 11v10H0Z" fill="#0b5cab" />
        <path d="M4 11h28v12H4Z" fill="#f3f3f3" />
        <path d="M0 11.500 18 23l18-11.500V33q0 1.500-1.500 1.500h-33Q0 34.500 0 33Z" fill="#1c9fe8" />
        <path d="M36 11.500 0 34.500h34.500Q36 34.500 36 33Z" fill="#36bdf3" />
        <path d="M18 23 36 34.500H0Z" fill="#1a94df" />
      </svg>
      <div className="relative ml-[18px] flex size-[60px] shrink-0 items-center justify-center rounded-lg border border-[#393939] bg-[#2d2d2d]">
        <svg width="36" height="36" viewBox="-18 -18 36 36" className="block">
          <circle r="18" fill="#fbbc05" />
          <path d="M-15.600-9A18 18 0 0 1 15.600-9H0L-7.800 4.500Z" fill="#ea4335" />
          <path d="M-15.600-9A18 18 0 0 0 0 18L7.800 4.500H-7.800Z" fill="#34a04a" />
          <circle r="9" fill="#fff" /><circle r="7" fill="#2f7de9" />
        </svg>
        <div className="absolute left-[31px] top-[4px] flex size-[23px] items-center justify-center rounded-full bg-[#78909c] font-['Roboto',sans-serif] text-[13px] font-bold text-[#dfe5e8]">V</div>
        <div className="absolute bottom-0 left-[17px] h-[5px] w-[24px] rounded-full bg-[#4cc2ff]" />
      </div>
      <Svg s={18} vb="0 0 18 18" className="ml-[182px]"><path d="M.500 12 9 3.500l8.500 8.500" fill="none" stroke="#fff" strokeWidth="1.300" /></Svg>
      <Svg s={24} vb="0 0 24 24" className="ml-[21px]">
        <g fill="none" stroke="#fff" strokeWidth="1.800" strokeLinecap="round"><path d="M1.200 9a15 15 0 0 1 21.600 0M4.500 12.700a10.500 10.500 0 0 1 15 0M8 16a5.800 5.800 0 0 1 8 0" /></g><circle cx="12" cy="18.500" r="2.200" />
      </Svg>
      <Svg s={25} vb="0 0 25 25" className="ml-[12px]">
        <g fill="none" stroke="#fff" strokeWidth="1.700" strokeLinejoin="round" strokeLinecap="round"><path d="M1 8.500h4.500l5-5v17l-5-5H1ZM14 9q2 3 0 6M17.500 6q4 6 0 12M21 3q6 9 0 18" /></g>
      </Svg>
      <Svg s={25} vb="0 0 25 25" className="ml-[11px]">
        <path d="M13 4.500h6.500q2 0 2 2v11q0 2-2 2H9" fill="none" stroke="#fff" strokeWidth="1.800" strokeLinecap="round" /><path d="M22 9h1q2 0 2 3t-2 3h-1Z" />
        <path d="M1 20c-.5-6 0-12 8-17 2 6 2 13-5 14.500L2.500 21Z" /><path d="M11.500 6c.5 6-.5 8-3.500 10.500" fill="none" stroke="#fff" strokeWidth="1.400" />
      </Svg>
      <div className="ml-[23px] flex w-[92px] shrink-0 flex-col items-end text-[16px] leading-[23px]">
        <Fit w={38}>16:14</Fit>
        <Fit w={92}>20/09/2023</Fit>
      </div>
      <div className="mb-[3px] ml-[11px] flex size-[24px] shrink-0 items-center justify-center rounded-full bg-[#4cc2ff] text-[15px] text-[#1a1a1a]">4</div>
    </div>
  );
}

export default function App() {
  return (
    <div className="h-[1080px] w-[1920px] overflow-hidden bg-white font-['Noto_Sans','Open_Sans',sans-serif]">
      <TabStrip />
      <Toolbar />
      <div className="flex h-[892px]">
        <div className="w-[1895px] shrink-0">
          <AppHeader />
          <div className="border-l border-[#d0d0d0]">
            <Breadcrumb />
            <ViewTabs />
            <Content />
            <Leaderboard />
            <div className="h-[15px] bg-[#e0e0e0] pl-[102px]"><div className="h-full w-[147px] bg-[#c8c8c8]" /></div>
          </div>
        </div>
        <div className="flex w-[25px] shrink-0 flex-col items-center bg-[#f1f1f1]">
          <Svg s={12} vb="0 0 12 12" className="mt-[8px]"><path d="M0 9 6 3l6 6Z" fill="#a3a3a3" /></Svg>
          <div className="mt-[5px] h-[474px] w-[21px] bg-[#c1c1c1]" />
          <Svg s={12} vb="0 0 12 12" className="mb-[6px] mt-auto"><path d="m0 3 6 6 6-6Z" fill="#505050" /></Svg>
        </div>
      </div>
      <Taskbar />
    </div>
  );
}
